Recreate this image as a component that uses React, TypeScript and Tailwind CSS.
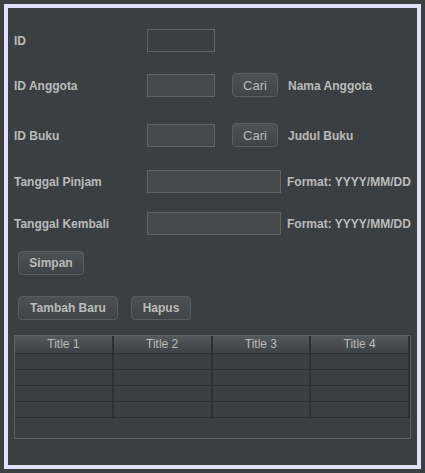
import { FC } from "react";

const font = { fontFamily: '"Liberation Sans", Arial, sans-serif' };

const Label: FC<{ text: string }> = ({ text }) => (
  <div className="w-[133px] shrink-0 text-[12px] font-bold text-[#bbbbbb] pt-[1px]">{text}</div>
);

const Field: FC<{ wide?: boolean; readOnly?: boolean }> = ({ wide, readOnly }) => (
  <div
    className={`h-[23px] shrink-0 border border-[#646464] ${wide ? "w-[134px]" : "w-[68px]"} ${
      readOnly ? "bg-[#3c3f41] border-[#5a5c5e]" : "bg-[#45494a]"
    }`}
  ></div>
);

const Btn: FC<{ text: string; w: string; bold?: boolean }> = ({ text, w, bold }) => (
  <button
    className={`h-[24px] ${w} shrink-0 rounded-[4px] border border-[#5a5d5f] bg-gradient-to-b from-[#4d5153] to-[#414446] text-[#bbbbbb] leading-none ${
      bold ? "text-[12px] font-bold" : "text-[13px]"
    }`}
  >
    {text}
  </button>
);

const SideText: FC<{ text: string }> = ({ text }) => (
  <div className="ml-[10px] pt-[1px] text-[12px] font-bold text-[#bbbbbb] whitespace-nowrap">{text}</div>
);

export default function App() {
  const rows = [0, 1, 2, 3];
  const titles = ["Title 1", "Title 2", "Title 3", "Title 4"];

  return (
    <div className="w-[425px] h-[473px] bg-[#3c3f41] p-[4px]" style={font}>
      <div className="w-[417px] h-[465px] border-4 border-[#e0e0ff] bg-[#3c3f41] flex flex-col pl-[6px]">
        <div className="mt-[20px] h-[24px] flex items-center">
          <Label text="ID" />
          <Field readOnly />
        </div>

        <div className="mt-[21px] h-[24px] flex items-center">
          <Label text="ID Anggota" />
          <Field />
          <div className="ml-[17px]">
            <Btn text="Cari" w="w-[46px]" />
          </div>
          <SideText text="Nama Anggota" />
        </div>

        <div className="mt-[26px] h-[24px] flex items-center">
          <Label text="ID Buku" />
          <Field />
          <div className="ml-[17px]">
            <Btn text="Cari" w="w-[46px]" />
          </div>
          <SideText text="Judul Buku" />
        </div>

        <div className="mt-[22px] h-[24px] flex items-center">
          <Label text="Tanggal Pinjam" />
          <Field wide />
          <div className="ml-[-4px]">
            <SideText text="Format: YYYY/MM/DD" />
          </div>
        </div>

        <div className="mt-[18px] h-[24px] flex items-center">
          <Label text="Tanggal Kembali" />
          <Field wide />
          <div className="ml-[-4px]">
            <SideText text="Format: YYYY/MM/DD" />
          </div>
        </div>

        <div className="mt-[16px] pl-[4px] flex">
          <Btn text="Simpan" w="w-[66px]" bold />
        </div>

        <div className="mt-[21px] pl-[4px] flex gap-[13px]">
          <Btn text="Tambah Baru" w="w-[100px]" bold />
          <Btn text="Hapus" w="w-[60px]" bold />
        </div>

        <div className="mt-[15px] w-[397px] h-[104px] border border-[#5e6162] flex flex-col">
          <div className="w-[395px] grid grid-cols-4">
            {titles.map((t) => (
              <div
                key={t}
                className="h-[18px] border-r-2 border-b border-[#2d2f30] bg-gradient-to-b from-[#54585a] to-[#3f4244] text-center text-[12px] leading-[17px] text-[#bbbbbb]"
              >
                {t}
              </div>
            ))}
            {rows.map((r) =>
              titles.map((t) => (
                <div key={`${r}-${t}`} className="h-[16px] border-r-2 border-b border-[#2d2f30] bg-[#3c3f41]"></div>
              ))
            )}
          </div>
        </div>
      </div>
    </div>
  );
}
